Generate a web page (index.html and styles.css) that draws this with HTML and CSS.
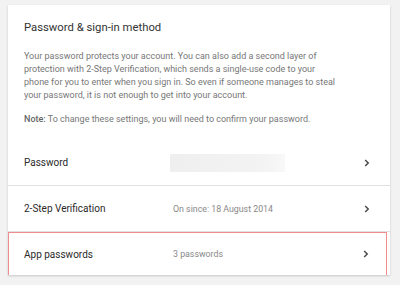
FILE: index.html
```html
<!DOCTYPE html>
<html>
<head>
<meta charset="utf-8">
<link rel="stylesheet" href="styles.css">
</head>
<body>
<div class="card">
  <div class="header">
    <div class="title">Password &amp; sign-in method</div>
    <p class="desc">Your password protects your account. You can also add a second layer of<br>protection with 2-Step Verification, which sends a single-use code to your<br>phone for you to enter when you sign in. So even if someone manages to steal<br>your password, it is not enough to get into your account.</p>
    <p class="note"><b>Note:</b> To change these settings, you will need to confirm your password.</p>
  </div>
  <div class="row">
    <div class="label">Password</div>
    <div class="value"><div class="blur"></div></div>
    <svg class="chev" width="6" height="8" viewBox="0 0 6 8"><path d="M1.2 1 L4.2 4 L1.2 7" fill="none" stroke="#4a4a4a" stroke-width="1.5"/></svg>
  </div>
  <div class="row">
    <div class="label">2-Step Verification</div>
    <div class="value">On since: 18 August 2014</div>
    <svg class="chev" width="6" height="8" viewBox="0 0 6 8"><path d="M1.2 1 L4.2 4 L1.2 7" fill="none" stroke="#4a4a4a" stroke-width="1.5"/></svg>
  </div>
  <div class="row hl">
    <div class="label">App passwords</div>
    <div class="value">3 passwords</div>
    <svg class="chev" width="6" height="8" viewBox="0 0 6 8"><path d="M1.2 1 L4.2 4 L1.2 7" fill="none" stroke="#4a4a4a" stroke-width="1.5"/></svg>
  </div>
</div>
</body>
</html>
```
FILE: styles.css
```css
html, body { margin: 0; padding: 0; }
body {
  background: #f2f2f2;
  font-family: Roboto, "Liberation Sans", sans-serif;
  width: 400px;
  height: 285px;
  overflow: hidden;
}
.card {
  margin: 5px 0 0 8px;
  width: 382px;
  background: #fff;
  box-shadow: 0 1px 2px rgba(0,0,0,0.18);
}
.header {
  padding: 16px 16px 14px 16px;
}
.title {
  font-size: 11.3px;
  line-height: 14px;
  color: #333;
}
.desc {
  margin: 15px 0 0 0;
  font-size: 9px;
  line-height: 13px;
  color: #777;
  white-space: nowrap;
}
.note {
  margin: 11px 0 0 0;
  font-size: 9px;
  line-height: 13px;
  color: #777;
  white-space: nowrap;
}
.note b { font-weight: 500; color: #666; }
.row {
  display: flex;
  align-items: center;
  height: 45px;
  padding: 0 20px 0 16px;
  border-bottom: 1px solid #e0e0e0;
}
.row:last-child { border-bottom: none; }
.label {
  width: 149px;
  font-size: 10px;
  color: #2a2a2a;
}
.value {
  flex: 1;
  font-size: 8.8px;
  color: #888;
}
.blur {
  margin-left: -3px;
  width: 115px;
  height: 18px;
  background: linear-gradient(90deg, #efefef, #f3f3f3 80%, #f8f8f8);
}
.chev { display: block; }
.hl {
  height: 42px;
  margin-right: 3px;
  border: 1px solid #f28b8b;
  padding-left: 15px;
  padding-right: 17px;
}
```
